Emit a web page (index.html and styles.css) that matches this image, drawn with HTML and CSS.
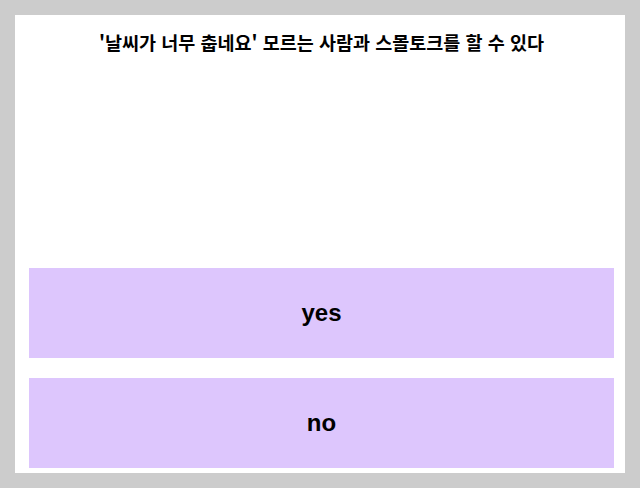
FILE: index.html
```html
<!DOCTYPE html>
<html lang="ko">
<head>
<meta charset="utf-8">
<link rel="stylesheet" href="styles.css">
</head>
<body>
<div class="card">
  <h1 class="question">'날씨가 너무 춥네요' 모르는 사람과 스몰토크를 할 수 있다</h1>
  <div class="answers">
    <button class="answer">yes</button>
    <button class="answer">no</button>
  </div>
</div>
</body>
</html>
```
FILE: styles.css
```css
html, body {
  margin: 0;
  padding: 0;
  background: #cccccc;
}
body {
  padding: 15px;
  height: 488px;
  box-sizing: border-box;
}
.card {
  background: #ffffff;
  width: 610px;
  height: 458px;
  box-sizing: border-box;
  padding: 0 11px 5px 14px;
  display: flex;
  flex-direction: column;
}
.question {
  margin: 0;
  padding-top: 15px;
  font-family: "Noto Sans CJK KR", sans-serif;
  font-weight: 700;
  font-size: 18.5px;
  line-height: 24px;
  text-align: center;
  color: #000;
}
.answers {
  margin-top: auto;
  display: flex;
  flex-direction: column;
  gap: 20px;
}
.answer {
  height: 90px;
  width: 100%;
  border: none;
  background: #ddc6fd;
  font-family: "Liberation Sans", Arial, sans-serif;
  font-weight: 700;
  font-size: 24px;
  color: #000;
  padding: 0;
  margin: 0;
}
```
